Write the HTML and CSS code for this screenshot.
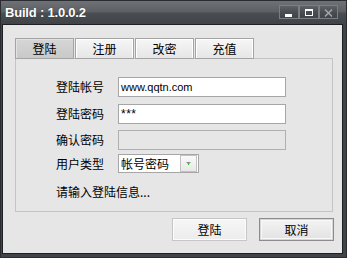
FILE: index.html
```html
<!DOCTYPE html>
<html>
<head>
<meta charset="utf-8">
<link rel="stylesheet" href="styles.css">
</head>
<body>
<div class="window">
  <div class="titlebar">
    <span class="title">Build : 1.0.0.2</span>
    <div class="wbtns">
      <div class="wbtn"><svg width="18" height="12" viewBox="0 0 18 12"><rect x="5" y="8" width="7" height="3" fill="#fff"/></svg></div>
      <div class="wbtn"><svg width="18" height="12" viewBox="0 0 18 12"><rect x="5.5" y="3.5" width="7" height="6" fill="none" stroke="#fff" stroke-width="1"/><rect x="5" y="3" width="8" height="2" fill="#fff"/></svg></div>
      <div class="wbtn"><svg width="17" height="12" viewBox="0 0 17 12"><path d="M5 3.5 L12 10.5 M12 3.5 L5 10.5" stroke="#a3a6a9" stroke-width="1.6" fill="none"/></svg></div>
    </div>
  </div>
  <div class="frame">
    <div class="client">
      <div class="tabs">
        <div class="tab active">登陆</div>
        <div class="tab">注册</div>
        <div class="tab">改密</div>
        <div class="tab">充值</div>
      </div>
      <div class="panel">
        <div class="row r1">
          <span class="label">登陆帐号</span>
          <div class="input"><span class="val">www.qqtn.com</span></div>
        </div>
        <div class="row r2">
          <span class="label">登陆密码</span>
          <div class="input"><span class="val stars">***</span></div>
        </div>
        <div class="row r3">
          <span class="label">确认密码</span>
          <div class="input disabled"></div>
        </div>
        <div class="row r4">
          <span class="label">用户类型</span>
          <div class="combo">
            <span class="combo-text">帐号密码</span>
            <div class="combo-btn"><svg width="15" height="15" viewBox="0 0 15 15"><path d="M5 6 H10 L7.5 8.5 Z" fill="#8a8a8a"/><rect x="7" y="8" width="1" height="1" fill="#10d010"/></svg></div>
          </div>
        </div>
        <div class="status">请输入登陆信息...</div>
      </div>
      <div class="buttons">
        <div class="btn">登陆</div>
        <div class="btn default">取消</div>
      </div>
    </div>
  </div>
</div>
</body>
</html>
```
FILE: styles.css
```css
html, body {
  margin: 0;
  padding: 0;
}
body {
  width: 347px;
  height: 258px;
  overflow: hidden;
  font-family: "Liberation Sans", "Noto Sans CJK SC", sans-serif;
}
.window {
  width: 347px;
  height: 258px;
  box-sizing: border-box;
  border: 1px solid #2a2c30;
  background: #404348;
  display: flex;
  flex-direction: column;
}
.titlebar {
  height: 23px;
  flex: none;
  display: flex;
  align-items: flex-start;
  padding: 0 8px 0 4px;
  background: linear-gradient(#6e7176 0px, #5c5f64 11px, #4a4d52 12px, #404348 23px);
}
.title {
  color: #fff;
  font-family: "Liberation Sans", sans-serif;
  font-weight: bold;
  font-size: 13px;
  line-height: 23px;
  letter-spacing: -0.2px;
  text-shadow: 0 0 1px rgba(0,0,0,0.5);
}
.wbtns {
  margin-left: auto;
  margin-top: 4px;
  display: flex;
}
.wbtn {
  width: 20px;
  height: 14px;
  box-sizing: border-box;
  border: 1px solid #7b7e82;
  background: linear-gradient(#5f6267, #4a4d52 50%, #404348);
  display: flex;
  align-items: center;
  justify-content: center;
}
.wbtn:last-child {
  width: 19px;
}
.frame {
  flex: 1;
  display: flex;
  padding: 0 3px 3px 1px;
}
.client {
  flex: 1;
  border: 1px solid #1e2023;
  background: #e6e6e6;
  padding: 13px 9px 0 12px;
  display: flex;
  flex-direction: column;
  font-family: "Noto Sans CJK SC", sans-serif;
  font-size: 12px;
  color: #000;
}
.tabs {
  display: flex;
  gap: 1px;
  height: 21px;
  position: relative;
  z-index: 1;
}
.tab {
  width: 59px;
  box-sizing: border-box;
  border: 1px solid #a4a4a4;
  box-shadow: inset 1px 1px 0 #fff, inset -1px 0 0 #fff;
  background: linear-gradient(#f6f6f6, #e6e6e6);
  display: flex;
  align-items: center;
  justify-content: center;
  font-size: 12px;
  line-height: 1;
}
.tab.active {
  background: linear-gradient(#d6d6d6, #c9c9c9);
  box-shadow: inset 1px 1px 0 #e2e2e2;
}
.panel {
  margin-top: -1px;
  height: 154px;
  box-sizing: border-box;
  border: 1px solid #c4c4c4;
  padding: 18px 0 0 40px;
  display: flex;
  flex-direction: column;
}
.row {
  display: flex;
  align-items: center;
  height: 20px;
}
.r2 { margin-top: 7px; }
.r3 { margin-top: 6px; }
.r4 { margin-top: 4px; height: 19px; }
.label {
  width: 62px;
  flex: none;
  line-height: 1;
}
.input {
  width: 168px;
  height: 20px;
  box-sizing: border-box;
  border: 1px solid #a6a6a6;
  background: #fff;
  display: flex;
  align-items: center;
  padding-left: 2px;
}
.input.disabled {
  background: #e6e6e6;
  border-color: #b0b0b0;
}
.val {
  font-family: "Liberation Sans", sans-serif;
  font-size: 11px;
}
.val.stars {
  font-size: 12px;
  letter-spacing: 0.5px;
}
.combo {
  width: 81px;
  height: 19px;
  box-sizing: border-box;
  border: 1px solid #a6a6a6;
  background: #fff;
  display: flex;
  align-items: center;
  padding-left: 2px;
}
.combo-text {
  flex: 1;
  line-height: 1;
}
.combo-btn {
  width: 17px;
  height: 17px;
  box-sizing: border-box;
  border: 1px solid #c2c2c2;
  background: linear-gradient(#fafafa, #e8e8e8);
  display: flex;
  align-items: center;
  justify-content: center;
  margin-right: 1px;
}
.status {
  margin-top: 9px;
  line-height: 20px;
}
.buttons {
  display: flex;
  justify-content: flex-end;
  gap: 12px;
  margin-top: 6px;
  margin-right: -1px;
}
.btn {
  width: 75px;
  height: 23px;
  box-sizing: border-box;
  border: 1px solid #c6c6c6;
  box-shadow: inset 0 0 0 1px #fbfbfb;
  background: linear-gradient(#f6f6f6, #ececec);
  display: flex;
  align-items: center;
  justify-content: center;
  line-height: 1;
}
.btn.default {
  border-color: #8c8c8c;
  box-shadow: inset 0 0 0 1px #d6d6d6, inset 0 0 0 2px #f8f8f8;
  background: linear-gradient(#f4f4f4, #e2e2e2);
}
```
